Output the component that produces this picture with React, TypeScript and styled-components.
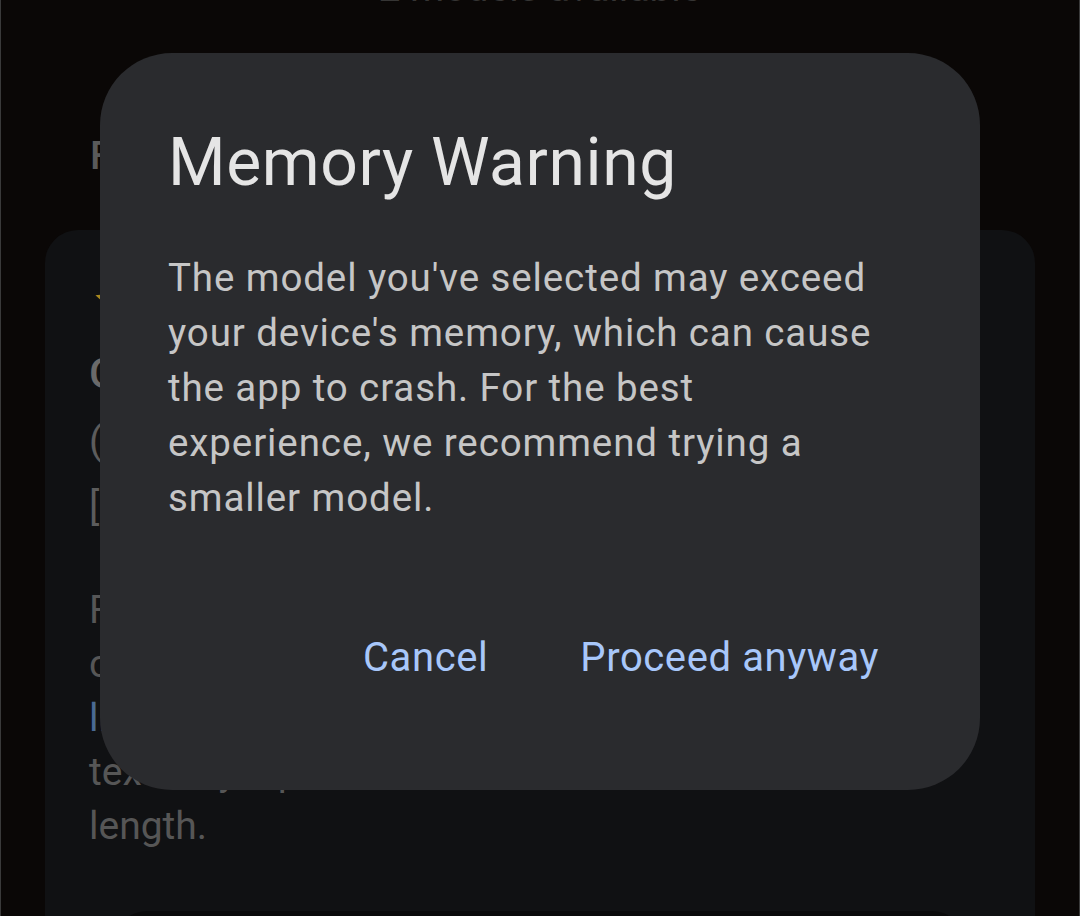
import React from "react";
import styled, { createGlobalStyle } from "styled-components";

const Global = createGlobalStyle`
  html, body { margin: 0; padding: 0; background: #0a0706; }
  * { box-sizing: border-box; }
  body { font-family: Roboto, "Noto Sans", "Liberation Sans", sans-serif; }
`;

const Page = styled.div`
  position: relative;
  width: 1080px;
  height: 916px;
  overflow: hidden;
  background: #0a0706;
  border-left: 1px solid #3a3a3a;
  border-right: 1px solid #3a3a3a;
`;

const Header = styled.div`
  margin-top: -39px;
  font-size: 39px;
  line-height: 55px;
  text-align: center;
  color: #363534;
`;

const SectionLabel = styled.div`
  margin-top: 113px;
  padding-left: 89px;
  font-size: 39px;
  line-height: 55px;
  font-weight: 500;
  color: #5a5a5a;
`;

const Card = styled.div`
  margin: 46px 44px 0;
  padding: 45px 44px 0;
  background: #101113;
  border-radius: 33px 33px 0 0;
  height: 800px;
`;

const StarIcon = styled.svg`
  display: block;
  width: 52px;
  height: 52px;
  margin-left: 1px;
`;

const ModelName = styled.div`
  margin-top: 17px;
  font-size: 42px;
  line-height: 60px;
  font-weight: 500;
  color: #6a6a6a;
`;

const Meta = styled.div`
  margin-top: 8px;
  font-size: 39px;
  line-height: 58px;
  color: #5c5c5c;
`;

const Description = styled.p`
  margin: 47px 0 0;
  font-size: 39px;
  line-height: 54px;
  color: #565656;
`;

const Link = styled.span`
  color: #4a6a93;
`;

const BottomBar = styled.div`
  margin: 58px 26px 0 25px;
  height: 120px;
  background: #0a0a0b;
  border-radius: 33px 33px 0 0;
`;

const Dialog = styled.div`
  position: absolute;
  left: 99px;
  top: 53px;
  width: 880px;
  height: 737px;
  background: #2a2b2e;
  border-radius: 72px;
  padding: 66px 68px 92px 68px;
  display: flex;
  flex-direction: column;
`;

const Title = styled.h2`
  margin: 0;
  font-size: 66px;
  line-height: 88px;
  font-weight: 400;
  letter-spacing: 0.6px;
  color: #e5e5e5;
`;

const Body = styled.p`
  margin: 43px 0 0;
  font-size: 38.5px;
  line-height: 55px;
  letter-spacing: 0.9px;
  color: #c6c6c6;
  width: 716px;
`;

const Actions = styled.div`
  margin-top: auto;
  display: flex;
  justify-content: flex-end;
  gap: 26px;
`;

const TextButton = styled.button`
  height: 80px;
  padding: 0 33px;
  border: none;
  background: transparent;
  font-family: inherit;
  font-size: 40px;
  line-height: 80px;
  font-weight: 400;
  letter-spacing: 0.6px;
  color: #a8c7fa;
  cursor: pointer;
`;

export default function App() {
  return (
    <>
      <Global />
      <Page>
        <Header>2 models available</Header>
        <SectionLabel>Featured models</SectionLabel>
        <Card>
          <StarIcon viewBox="0 0 24 24">
            <path
              d="M12 2.5l2.9 6.1 6.6.7-4.9 4.5 1.4 6.6L12 17.1l-5.9 3.3 1.4-6.6L2.5 9.3l6.6-.7z"
              fill="#a8891f"
            />
          </StarIcon>
          <ModelName>Gemma3-1B-IT q4</ModelName>
          <Meta>(Best overall)</Meta>
          <Meta>[554 MB]</Meta>
          <Description>
            Featuring Gemma 3 1B, optimized for
            <br />
            compact on-device inference with
            <br />
            <Link>litert-community/Gemma3-1B-IT</Link>
            <br />
            text-only input and a 4096 token context
            <br />
            length.
          </Description>
          <BottomBar />
        </Card>
        <Dialog role="dialog">
          <Title>Memory Warning</Title>
          <Body>
            The model you've selected may exceed your device's memory, which can cause
            the app to crash. For the best experience, we recommend trying a smaller
            model.
          </Body>
          <Actions>
            <TextButton>Cancel</TextButton>
            <TextButton>Proceed anyway</TextButton>
          </Actions>
        </Dialog>
      </Page>
    </>
  );
}
